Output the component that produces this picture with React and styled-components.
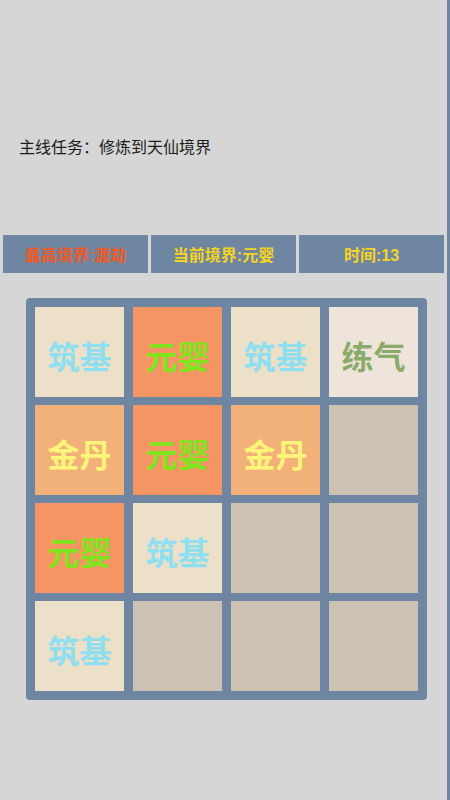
import React from "react";
import styled, { createGlobalStyle } from "styled-components";

const Global = createGlobalStyle`
  html, body { margin: 0; padding: 0; background: #d6d6d6; }
  body { font-family: "Noto Sans CJK SC", "Noto Sans", sans-serif; }
`;

const Page = styled.div`
  box-sizing: border-box;
  width: 450px;
  height: 800px;
  border-right: 3px solid #6f86a3;
  display: flex;
  flex-direction: column;
  overflow: hidden;
`;

const Mission = styled.div`
  margin: 135px 0 0 19px;
  font-size: 16px;
  line-height: 22px;
  color: #1c1c1c;
`;

const Stats = styled.div`
  margin: 78px 0 0 3px;
  display: grid;
  grid-template-columns: repeat(3, 145px);
  gap: 3px;
`;

const Stat = styled.div`
  height: 38px;
  background: #6f86a3;
  display: flex;
  align-items: center;
  justify-content: center;
  font-family: "Liberation Sans", "Noto Sans CJK SC", sans-serif;
  font-size: 16px;
  font-weight: 700;
  color: ${(p) => p.$color};
`;

const Board = styled.div`
  margin: 25px 0 0 26px;
  width: 401px;
  height: 402px;
  box-sizing: border-box;
  padding: 9px;
  background: #6f86a3;
  border-radius: 4px;
  display: grid;
  grid-template-columns: repeat(4, 1fr);
  grid-template-rows: repeat(4, 1fr);
  column-gap: 9px;
  row-gap: 8px;
`;

const Tile = styled.div`
  background: ${(p) => p.$bg};
  color: ${(p) => p.$fg};
  display: flex;
  align-items: center;
  justify-content: center;
  font-size: 32px;
  font-weight: 700;
  padding-top: 6px;
  box-sizing: border-box;
`;

const kinds = {
  筑基: { bg: "#ede0c8", fg: "#8fdff0" },
  元婴: { bg: "#f59563", fg: "#7fe51c" },
  金丹: { bg: "#f2b179", fg: "#fdf57a" },
  练气: { bg: "#eee4da", fg: "#8bab6b" },
  "": { bg: "#cdc1b4", fg: "transparent" },
};

const grid = [
  ["筑基", "元婴", "筑基", "练气"],
  ["金丹", "元婴", "金丹", ""],
  ["元婴", "筑基", "", ""],
  ["筑基", "", "", ""],
];

export default function App() {
  return (
    <>
      <Global />
      <Page>
        <Mission>主线任务：修炼到天仙境界</Mission>
        <Stats>
          <Stat $color="#f2591f">最高境界:渡劫</Stat>
          <Stat $color="#f6d420">当前境界:元婴</Stat>
          <Stat $color="#f6d420">时间:13</Stat>
        </Stats>
        <Board>
          {grid.flat().map((t, i) => (
            <Tile key={i} $bg={kinds[t].bg} $fg={kinds[t].fg}>
              {t}
            </Tile>
          ))}
        </Board>
      </Page>
    </>
  );
}
